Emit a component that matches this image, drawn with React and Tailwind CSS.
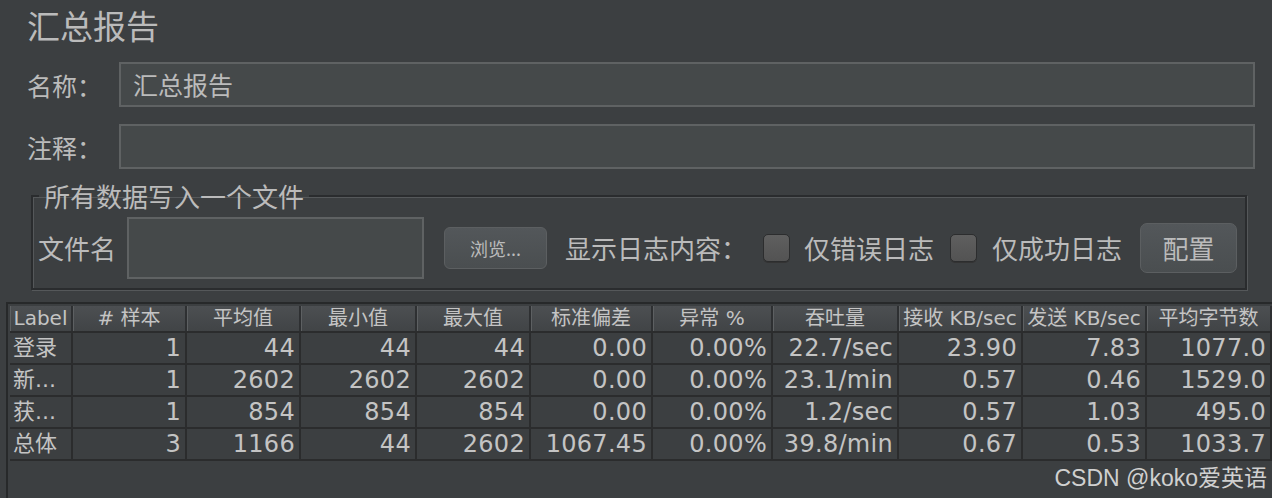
const headers = ["Label", "# 样本", "平均值", "最小值", "最大值", "标准偏差", "异常 %", "吞吐量", "接收 KB/sec", "发送 KB/sec", "平均字节数"];

const rows = [
  ["登录", "1", "44", "44", "44", "0.00", "0.00%", "22.7/sec", "23.90", "7.83", "1077.0"],
  ["新...", "1", "2602", "2602", "2602", "0.00", "0.00%", "23.1/min", "0.57", "0.46", "1529.0"],
  ["获...", "1", "854", "854", "854", "0.00", "0.00%", "1.2/sec", "0.57", "1.03", "495.0"],
  ["总体", "3", "1166", "44", "2602", "1067.45", "0.00%", "39.8/min", "0.67", "0.53", "1033.7"],
];

const gridCols = "grid grid-cols-[63px_114px_114px_116px_114px_122px_120px_126px_124px_124px_125px]";

function TextBox({ children, className = "" }) {
  return (
    <div className={`border-2 border-[#5f6263] bg-[#45494a] flex items-center ${className}`}>
      {children}
    </div>
  );
}

function Check() {
  return (
    <div className="w-[27px] h-[28px] rounded-[5px] border border-[#2c2d2e] bg-linear-to-b from-[#5f5f5f] to-[#535353] shadow-[0_1px_0_#333]" />
  );
}

export default function App() {
  return (
    <div className="relative w-[1272px] h-[498px] overflow-hidden bg-[#3c3f41] text-[#bbbbbb] font-['Noto_Sans_CJK_SC',sans-serif]">
      <div className="h-[62px] pl-[27px] pt-[5px] text-[33px] leading-[40px]">汇总报告</div>

      <div className="flex items-center pl-[27px] pr-[17px]">
        <div className="w-[92px] text-[25px] leading-[30px]">名称：</div>
        <TextBox className="flex-1 h-[45px] pl-[12px] text-[25px]">汇总报告</TextBox>
      </div>

      <div className="mt-[17px] flex items-center pl-[27px] pr-[17px]">
        <div className="w-[92px] text-[25px] leading-[30px]">注释：</div>
        <TextBox className="flex-1 h-[45px]" />
      </div>

      <fieldset className="mt-[13px] ml-[31px] mr-[25px] border-2 border-[#2a2c2e] px-[5px] pt-[7px] pb-[9px] shadow-[inset_1px_1px_0_#55585a,1px_1px_0_#55585a]">
        <legend className="ml-[1px] px-[5px] text-[26px] leading-[28px]">所有数据写入一个文件</legend>
        <div className="flex items-center h-[62px] text-[26px] leading-[30px]">
          <div className="w-[89px]">文件名</div>
          <TextBox className="w-[297px] h-[62px]" />
          <button className="ml-[20px] w-[103px] h-[42px] rounded-[6px] border border-[#5c5f61] bg-linear-to-b from-[#53575a] to-[#4a4e50] text-[18px] text-[#bbbbbb]">
            浏览...
          </button>
          <div className="ml-[18px] w-[198px]">显示日志内容：</div>
          <Check />
          <div className="ml-[14px]">仅错误日志</div>
          <div className="ml-[16px]"><Check /></div>
          <div className="ml-[15px]">仅成功日志</div>
          <button className="ml-[18px] w-[97px] h-[50px] rounded-[7px] border border-[#5c5f61] bg-linear-to-b from-[#53575a] to-[#4a4e50] text-[26px] text-[#bbbbbb]">
            配置
          </button>
        </div>
      </fieldset>

      <div className="mt-[12px] ml-[6px] h-[220px] border-l-2 border-t-2 border-[#27292a] pl-[2px] pt-[2px] font-['DejaVu_Sans','Noto_Sans_CJK_SC',sans-serif] text-[#c4c4c4]">
        <div className={`${gridCols} h-[27px] border-b-2 border-[#2b2c2d]`}>
          {headers.map((h) => (
            <div
              key={h}
              className="flex items-center justify-center overflow-hidden whitespace-nowrap border-r-2 border-[#2e3032] bg-linear-to-b from-[#4c4f52] to-[#414446] shadow-[inset_1px_0_0_#5d6062] text-[20px] leading-[25px]"
            >
              {h}
            </div>
          ))}
        </div>
        {rows.map((r) => (
          <div key={r[0]} className={`${gridCols} h-[32px] border-b-2 border-[#2b2c2d]`}>
            {r.map((c, i) =>
              i === 0 ? (
                <div key={i} className="flex items-center pl-[3px] border-r-2 border-[#2b2c2d] text-[22px] leading-[30px] whitespace-nowrap overflow-hidden">
                  {c}
                </div>
              ) : (
                <div key={i} className="flex items-center justify-end pr-[4px] border-r-2 border-[#2b2c2d] text-[24px] leading-[30px] tracking-[0.3px] whitespace-nowrap overflow-hidden">
                  {c}
                </div>
              )
            )}
          </div>
        ))}
      </div>

      <div className="absolute right-[5px] bottom-[7px] text-[23px] leading-[26px] text-[#d0d0d0] font-['Liberation_Sans','Noto_Sans_CJK_SC',sans-serif]">
        CSDN @koko爱英语
      </div>
    </div>
  );
}
